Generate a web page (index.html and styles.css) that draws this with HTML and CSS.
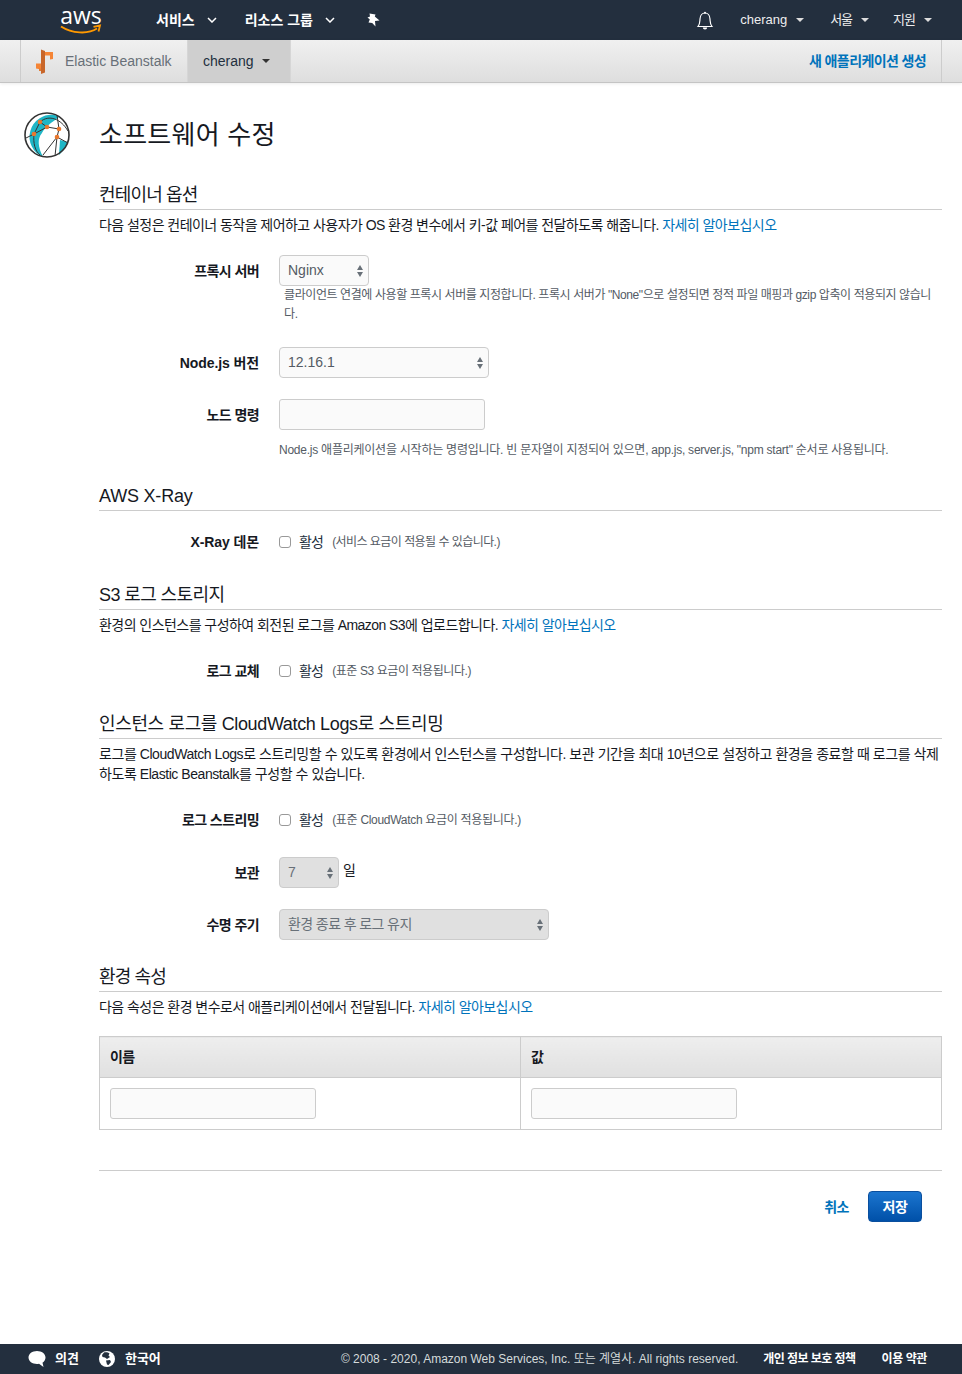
FILE: index.html
```html
<!DOCTYPE html>
<html lang="ko">
<head>
  <meta charset="UTF-8">
  <meta name="viewport" content="width=device-width, initial-scale=1.0">
  <title>소프트웨어 수정 - Elastic Beanstalk</title>
  <link rel="stylesheet" href="styles.css">
</head>
<body>
  <div class="page">
    <nav class="topnav">
      <div class="aws-logo">
        <span class="aws-word">aws</span>
        <svg class="aws-smile" width="42" height="12" viewBox="0 0 42 12"><path d="M1 2.5C12 9.5 28 10.500 37 4.500" fill="none" stroke="#f90" stroke-width="2"/><path d="M33.500 2.800L40 1.500 38.500 7.500" fill="none" stroke="#f90" stroke-width="1.800"/></svg>
      </div>
      <a class="topnav-main first">서비스<svg class="chev" width="10" height="6" viewBox="0 0 10 6"><path d="M1 1l4 4 4-4" fill="none" stroke="#fff" stroke-width="1.500"/></svg></a>
      <a class="topnav-main">리소스 그룹<svg class="chev" width="10" height="6" viewBox="0 0 10 6"><path d="M1 1l4 4 4-4" fill="none" stroke="#fff" stroke-width="1.500"/></svg></a>
      <svg class="pin" width="14" height="14" viewBox="0 0 14 14"><path d="M3.500 0.500L9.500 1.500 8.800 3.500 13.500 7.500 9 8 9.500 13.500 6.200 10 2.500 9.500 3.800 6.500 1.500 4.500 4 3.500z" fill="#fff"/></svg>
      <div class="topnav-right">
        <svg class="bell" width="18" height="19" viewBox="0 0 18 19"><path d="M2 15.500C4 13 3.800 11 4 8c.2-3.500 2.300-6 5-6s4.800 2.500 5 6c.2 3 0 5 2 7.500z" fill="none" stroke="#fff" stroke-width="1.200"/><path d="M6.800 16.500a2.200 2 0 0 0 4.400 0z" fill="#fff"/><circle cx="9" cy="1.800" r="1" fill="#fff"/></svg>
        <a class="topnav-item user">cherang<span class="caret-light"></span></a>
        <a class="topnav-item region"><span class="ko">서울</span><span class="caret-light"></span></a>
        <a class="topnav-item support"><span class="ko">지원</span><span class="caret-light"></span></a>
      </div>
    </nav>

    <div class="subnav">
      <div class="brand">
        <svg width="18" height="25" viewBox="0 0 18 25"><path d="M5 0.500L9 2V23.500L5 25z" fill="#c8662a"/><path d="M9 3H17V10L14 10.500V6.500H9z" fill="#f58536"/><path d="M0 14.500H5V20.500L0 19.500z" fill="#f58536"/><path d="M3 19.500H5V22H3z" fill="#e27a32"/></svg>
        <span>Elastic Beanstalk</span>
      </div>
      <div class="env-tab">cherang<span class="caret-dark"></span></div>
      <a class="create-app">새 애플리케이션 생성</a>
    </div>

    <main class="content">
      <header class="page-title">
        <svg class="title-icon" width="48" height="48" viewBox="0 0 48 48">
          <circle cx="24" cy="24" r="22" fill="#fff"/>
          <path d="M32 4A22 22 0 0 0 20 46C15 36 14 28 19 22 22 16 28 12 36 6z" fill="#1fb6c6"/>
          <path d="M36 44C40 40 43 36 45 31L37 29z" fill="#1fb6c6"/>
          <circle cx="24" cy="24" r="22" fill="none" stroke="#333" stroke-width="1.600"/>
          <path d="M11 23L17 11 24 16 36 18 34 26 20 44M11 23L24 16M17 11C26 3 38 8 45 20M34 26L45 32M34 26L32 45M11 23C10 32 12 40 17 44M11 23L3 27M36 18L34 4" fill="none" stroke="#333" stroke-width="1"/>
          <circle cx="17" cy="11" r="2.300" fill="#e8772e"/><circle cx="24" cy="16" r="2.300" fill="#e8772e"/><circle cx="36" cy="18" r="2.300" fill="#e8772e"/><circle cx="11" cy="23" r="2.300" fill="#e8772e"/><circle cx="34" cy="26" r="2.300" fill="#e8772e"/>
        </svg>
        <h1>소프트웨어 수정</h1>
      </header>

      <section class="section">
        <h2 class="tight">컨테이너 옵션</h2>
        <p class="desc">다음 설정은 컨테이너 동작을 제어하고 사용자가 OS 환경 변수에서 키-값 페어를 전달하도록 해줍니다. <a class="link">자세히 알아보십시오</a></p>
        <div class="rows">
          <div class="row">
            <label class="row-label">프록시 서버</label>
            <div class="row-field">
              <div class="select w-90"><span>Nginx</span><i class="updown"></i></div>
              <p class="help indented">클라이언트 연결에 사용할 프록시 서버를 지정합니다. 프록시 서버가 "None"으로 설정되면 정적 파일 매핑과 gzip 압축이 적용되지 않습니다.</p>
            </div>
          </div>
          <div class="row gap-23">
            <label class="row-label latin">Node.js 버전</label>
            <div class="row-field">
              <div class="select w-210"><span>12.16.1</span><i class="updown"></i></div>
            </div>
          </div>
          <div class="row gap-21">
            <label class="row-label">노드 명령</label>
            <div class="row-field">
              <input class="text-input" type="text">
              <p class="help spaced">Node.js 애플리케이션을 시작하는 명령입니다. 빈 문자열이 지정되어 있으면, app.js, server.js, "npm start" 순서로 사용됩니다.</p>
            </div>
          </div>
        </div>
      </section>

      <section class="section xray">
        <h2 class="latin-head">AWS X-Ray</h2>
        <div class="row check-row">
          <label class="row-label latin">X-Ray 데몬</label>
          <div class="check-field"><span class="checkbox"></span><span class="check-text">활성</span><span class="note ko-note">(서비스 요금이 적용될 수 있습니다.)</span></div>
        </div>
      </section>

      <section class="section s3">
        <h2 class="mid">S3 로그 스토리지</h2>
        <p class="desc">환경의 인스턴스를 구성하여 회전된 로그를 Amazon S3에 업로드합니다. <a class="link">자세히 알아보십시오</a></p>
        <div class="row check-row after-desc">
          <label class="row-label">로그 교체</label>
          <div class="check-field"><span class="checkbox"></span><span class="check-text">활성</span><span class="note">(표준 S3 요금이 적용됩니다.)</span></div>
        </div>
      </section>

      <section class="section cw">
        <h2 class="wide">인스턴스 로그를 CloudWatch Logs로 스트리밍</h2>
        <p class="desc loose">로그를 CloudWatch Logs로 스트리밍할 수 있도록 환경에서 인스턴스를 구성합니다. 보관 기간을 최대 10년으로 설정하고 환경을 종료할 때 로그를 삭제하도록 Elastic Beanstalk를 구성할 수 있습니다.</p>
        <div class="row check-row after-desc">
          <label class="row-label">로그 스트리밍</label>
          <div class="check-field"><span class="checkbox"></span><span class="check-text">활성</span><span class="note latin-note">(표준 CloudWatch 요금이 적용됩니다.)</span></div>
        </div>
        <div class="row gap-27">
          <label class="row-label">보관</label>
          <div class="row-field inline">
            <div class="select w-60 disabled"><span>7</span><i class="updown"></i></div>
            <span class="unit">일</span>
          </div>
        </div>
        <div class="row gap-21">
          <label class="row-label">수명 주기</label>
          <div class="row-field">
            <div class="select w-270 disabled"><span>환경 종료 후 로그 유지</span><i class="updown"></i></div>
          </div>
        </div>
      </section>

      <section class="section env">
        <h2 class="tight">환경 속성</h2>
        <p class="desc">다음 속성은 환경 변수로서 애플리케이션에서 전달됩니다. <a class="link">자세히 알아보십시오</a></p>
        <table class="env-table">
          <thead>
            <tr><th class="col-name">이름</th><th>값</th></tr>
          </thead>
          <tbody>
            <tr>
              <td><input class="text-input" type="text"></td>
              <td><input class="text-input" type="text"></td>
            </tr>
          </tbody>
        </table>
      </section>

      <div class="actions">
        <a class="cancel">취소</a>
        <button class="save">저장</button>
      </div>
    </main>

    <footer class="footer">
      <svg class="foot-chat" width="18" height="18" viewBox="0 0 18 18"><path d="M9 1c4.700 0 8.500 2.800 8.500 6.500 0 2.300-1.200 4-3 5.200L15.500 17 11 13.800c-.7.100-1.300.2-2 .2C4.300 14 .5 11.200.5 7.500S4.300 1 9 1z" fill="#fff"/></svg>
      <a class="foot-strong feedback">의견</a>
      <svg class="foot-globe" width="16" height="16" viewBox="0 0 16 16"><circle cx="8" cy="8" r="8" fill="#fff"/><path d="M5 1.500C7 1 9.500 1.500 10.500 2.500L9.500 4.500 11 6 8 8 6 6.500 3.500 6 3 4zM7 9.500L11 9 12 11 9.500 14 8 13.500z" fill="#232f3e"/></svg>
      <a class="foot-strong lang">한국어</a>
      <span class="copyright">© 2008 - 2020, Amazon Web Services, Inc. 또는 계열사. All rights reserved.</span>
      <a class="foot-strong privacy">개인 정보 보호 정책</a>
      <a class="foot-strong terms">이용 약관</a>
    </footer>
  </div>
</body>
</html>
```

FILE: styles.css
```css
/* Globals */
* {
  box-sizing: border-box;
}

body {
  margin: 0;
  font-family: "Liberation Sans", "Noto Sans CJK KR", sans-serif;
  font-size: 14px;
  line-height: 20px;
  color: #16191f;
  background-color: #fff;
}

.page {
  width: 962px;
  height: 1374px;
  display: flex;
  flex-direction: column;
  overflow: hidden;
}

.link {
  color: #0073bb;
}

/* Top nav */
.topnav {
  height: 40px;
  flex: none;
  display: flex;
  align-items: center;
  background-color: #232f3e;
  color: #fff;
}

.aws-logo {
  width: 42px;
  height: 34px;
  margin-left: 60px;
  display: flex;
  flex-direction: column;
  align-items: center;
}

.aws-word {
  font-family: "Open Sans", sans-serif;
  font-size: 23px;
  line-height: 20px;
  margin-top: 2px;
}

.aws-smile {
  margin-top: -1px;
}

.topnav-main {
  font-weight: bold;
  display: flex;
  align-items: center;
  margin-left: 28px;
}

.topnav-main.first {
  margin-left: 54px;
}

.chev {
  margin-left: 12px;
}

.pin {
  margin-left: 31px;
}

.topnav-right {
  margin-left: auto;
  display: flex;
  align-items: center;
  padding-right: 30px;
}

.topnav-item {
  font-size: 13px;
  display: flex;
  align-items: center;
  color: #eee;
}

.topnav-item .ko {
  letter-spacing: -1px;
}

.user {
  margin-left: 26px;
}

.region {
  margin-left: 26px;
}

.support {
  margin-left: 24px;
}

.caret-light {
  margin-left: 9px;
  border-top: 4px solid #ddd;
  border-left: 4px solid transparent;
  border-right: 4px solid transparent;
}

/* Service bar */
.subnav {
  height: 43px;
  flex: none;
  display: flex;
  align-items: stretch;
  padding-left: 20px;
  padding-right: 20px;
  background: linear-gradient(#f0f0f0, #dedede);
  border-bottom: 1px solid #c4c4c4;
  box-shadow: 0 1px 3px rgba(0, 0, 0, 0.08);
}

.brand {
  width: 167px;
  display: flex;
  align-items: center;
  gap: 11px;
  padding-left: 15px;
  border-left: 1px solid #ccc;
  color: #687078;
}

.env-tab {
  width: 104px;
  display: flex;
  align-items: center;
  padding-left: 15px;
  background-color: #cfcfcf;
  border-left: 1px solid #d6d6d6;
  border-right: 1px solid #d6d6d6;
  color: #232f3e;
}

.caret-dark {
  margin-left: 8px;
  border-top: 4px solid #333;
  border-left: 4px solid transparent;
  border-right: 4px solid transparent;
}

.create-app {
  margin-left: auto;
  width: 133px;
  display: flex;
  align-items: center;
  font-weight: bold;
  letter-spacing: -0.6px;
  color: #0073bb;
  border-right: 1px solid #ccc;
  white-space: nowrap;
}

/* Content */
.content {
  flex: 1;
  padding-left: 99px;
  padding-right: 20px;
}

.page-title {
  position: relative;
  height: 74px;
  padding-top: 31px;
}

.title-icon {
  position: absolute;
  left: -76px;
  top: 28px;
}

h1 {
  margin: 0;
  font-size: 26px;
  line-height: 42px;
  font-weight: normal;
  letter-spacing: 0.25px;
}

.section {
  margin-top: 26px;
}

h2 {
  margin: 0;
  height: 27px;
  font-size: 18px;
  line-height: 24px;
  font-weight: normal;
  border-bottom: 1px solid #ccc;
}

h2.tight {
  letter-spacing: -0.85px;
}

h2.mid {
  letter-spacing: -0.6px;
}

h2.wide {
  letter-spacing: -0.36px;
}

h2.latin-head {
  letter-spacing: -0.2px;
}

.desc {
  margin: 5px 0 0;
  letter-spacing: -0.55px;
}

.desc.loose {
  letter-spacing: -0.44px;
}

.rows {
  margin-top: 20px;
}

.row {
  display: flex;
  gap: 20px;
}

.row-label {
  width: 160px;
  flex: none;
  padding-top: 6px;
  text-align: right;
  font-weight: bold;
  letter-spacing: -0.6px;
}

.row-label.latin {
  letter-spacing: -0.1px;
}

.row-field {
  flex: 1;
}

.row-field.inline {
  display: flex;
  align-items: flex-start;
  gap: 4px;
}

.gap-21 {
  margin-top: 21px;
}

.gap-23 {
  margin-top: 23px;
}

.gap-27 {
  margin-top: 27px;
}

/* Controls */
.select {
  position: relative;
  height: 31px;
  padding: 0 8px 2px;
  display: flex;
  align-items: center;
  background-color: #fafafa;
  border: 1px solid #ccc;
  border-radius: 4px;
  color: #545b64;
}

.select.disabled {
  background-color: #e0e0e0;
  color: #687078;
  letter-spacing: -0.6px;
}

.w-60 {
  width: 60px;
}

.w-90 {
  width: 90px;
}

.w-210 {
  width: 210px;
}

.w-270 {
  width: 270px;
}

.updown {
  position: absolute;
  right: 3px;
  top: 9px;
  width: 8px;
  height: 12px;
}

.updown::before,
.updown::after {
  content: "";
  position: absolute;
  left: 0;
  border-left: 3.5px solid transparent;
  border-right: 3.5px solid transparent;
}

.updown::before {
  top: 0;
  border-bottom: 5px solid #687078;
}

.updown::after {
  bottom: 0;
  border-top: 5px solid #687078;
}

.text-input {
  display: block;
  width: 206px;
  height: 31px;
  margin: 0;
  background-color: #fafafa;
  border: 1px solid #ccc;
  border-radius: 3px;
}

.help {
  margin: 0;
  font-size: 12px;
  color: #545b64;
}

.help.indented {
  padding-left: 5px;
  padding-right: 5px;
  line-height: 19px;
  letter-spacing: -0.41px;
}

.help.spaced {
  margin-top: 10px;
  letter-spacing: -0.24px;
}

.unit {
  margin-top: 3px;
}

/* Checkbox rows */
.check-field {
  display: flex;
  align-items: center;
  padding-top: 1px;
}

.check-row {
  margin-top: 20px;
}

.check-row .row-label {
  padding-top: 1px;
}

.check-row.after-desc {
  margin-top: 25px;
}

.checkbox {
  width: 12px;
  height: 12px;
  background-color: #fff;
  border: 1px solid #999;
  border-radius: 3px;
}

.check-text {
  margin-left: 8px;
  letter-spacing: -0.8px;
  color: #232f3e;
}

.note {
  margin-left: 9px;
  font-size: 12px;
  letter-spacing: -0.42px;
  color: #545b64;
}

.note.ko-note {
  letter-spacing: -0.55px;
}

.note.latin-note {
  letter-spacing: -0.3px;
}

.xray {
  margin-top: 24px;
}

.s3 {
  margin-top: 31px;
}

.cw {
  margin-top: 31px;
}

.env {
  margin-top: 25px;
}

/* Table */
.env-table {
  width: 843px;
  margin-top: 19px;
  border-collapse: collapse;
  table-layout: fixed;
}

.env-table th,
.env-table td {
  border: 1px solid #ccc;
  padding: 10px;
  text-align: left;
}

.env-table th {
  height: 41px;
  background: linear-gradient(#eee, #e0e0e0);
  font-weight: bold;
  letter-spacing: -0.7px;
}

.col-name {
  width: 421px;
}

/* Save / cancel */
.actions {
  margin-top: 40px;
  padding-top: 20px;
  padding-right: 20px;
  display: flex;
  justify-content: flex-end;
  align-items: center;
  border-top: 1px solid #ccc;
}

.cancel {
  margin-right: 19px;
  font-weight: bold;
  letter-spacing: -0.5px;
  color: #0073bb;
}

.save {
  width: 54px;
  height: 31px;
  padding: 0;
  font: inherit;
  font-weight: bold;
  letter-spacing: -0.5px;
  color: #fff;
  background: linear-gradient(#1b75cf, #0050a8);
  border: 1px solid #0a4f9e;
  border-radius: 4px;
}

/* Footer */
.footer {
  height: 30px;
  flex: none;
  display: flex;
  align-items: center;
  padding-left: 28px;
  padding-right: 35px;
  background-color: #232f3e;
  color: #fff;
  font-size: 12px;
}

.foot-strong {
  font-weight: bold;
}

.feedback {
  margin-left: 9px;
  font-size: 13px;
}

.foot-globe {
  margin-left: 20px;
}

.lang {
  margin-left: 10px;
  font-size: 13px;
}

.copyright {
  margin-left: auto;
  color: #d5dbdb;
}

.privacy {
  margin-left: 25px;
  letter-spacing: -0.55px;
}

.terms {
  margin-left: 26px;
  letter-spacing: -0.4px;
}
```
